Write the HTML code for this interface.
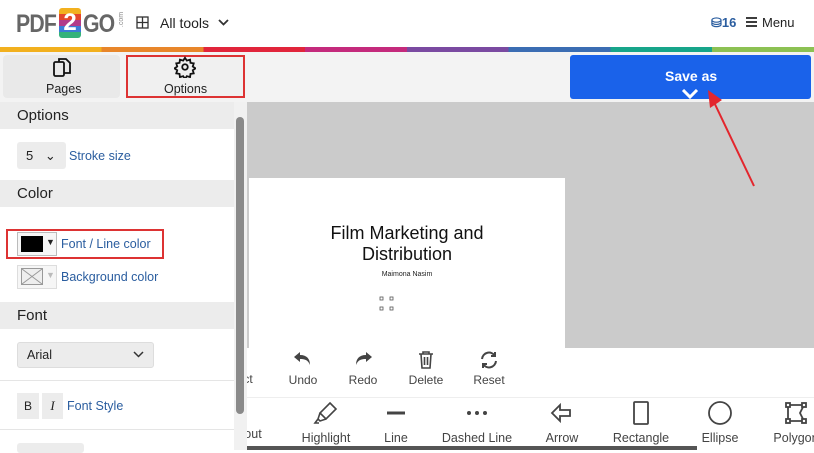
<!DOCTYPE html>
<html><head><meta charset="utf-8">
<style>
*{box-sizing:border-box;margin:0;padding:0}
body{width:814px;height:450px;overflow:hidden;background:#fff;font-family:"Liberation Sans",sans-serif;position:relative;color:#222}
.a{position:absolute}
.lbl{color:#2a5d9f;font-size:12.5px}
.sec{position:absolute;left:0;width:234px;background:#ececec;font-size:15px;padding-left:17px;color:#222}
.tool{position:absolute;text-align:center;font-size:12px;color:#444}
</style></head><body>
<!-- header -->
<div class="a" style="left:16px;top:10px;font-weight:bold;font-size:25px;color:#666;letter-spacing:-1px;transform:scaleX(.85);transform-origin:left">PDF</div>
<div class="a" style="left:59px;top:8px;width:22px;height:30px;background:linear-gradient(#f2b01e 0 20%,#e4462a 20% 40%,#b23a8a 40% 60%,#3b7bd6 60% 80%,#34b27a 80%);border-radius:3px;color:#fff;font-weight:bold;font-size:24px;text-align:center;line-height:30px">2</div>
<div class="a" style="left:83px;top:10px;font-weight:bold;font-size:25px;color:#666;letter-spacing:-1px;transform:scaleX(.85);transform-origin:left">GO</div>
<div class="a" style="left:114px;top:16px;font-size:7px;color:#888;transform:rotate(-90deg)">.com</div>
<svg class="a" style="left:136px;top:16px" width="13" height="13" viewBox="0 0 13 13" fill="none" stroke="#333" stroke-width="1.3"><rect x="1" y="1" width="11" height="11"/><path d="M6.5 1v11M1 6.5h11"/></svg>
<div class="a" style="left:160px;top:15px;font-size:14px">All tools</div>
<svg class="a" style="left:218px;top:19px" width="11" height="8" viewBox="0 0 11 8"><path d="M1 1l4.5 4.5L10 1" stroke="#333" stroke-width="1.8" fill="none"/></svg>
<div class="a" style="left:711px;top:15px;font-size:13px;color:#2a5d9f;font-weight:bold">⛁16</div>
<svg class="a" style="left:746px;top:17px" width="11" height="10"><path d="M0 1h11M0 5h11M0 9h11" stroke="#222" stroke-width="1.8"/></svg>
<div class="a" style="left:762px;top:15px;font-size:13px">Menu</div>
<div class="a" style="left:0;top:47px;width:814px;height:5px;background:linear-gradient(90deg,#f2b01e 0 12.5%,#e8862a 12.5% 25%,#e1253b 25% 37.5%,#c42a7c 37.5% 50%,#7a4aa1 50% 62.5%,#3b6db3 62.5% 75%,#17a58a 75% 87.5%,#8cc153 87.5%)"></div>
<!-- tab row -->
<div class="a" style="left:0;top:52px;width:814px;height:50px;background:#f3f3f3"></div>
<div class="a" style="left:3px;top:55px;width:117px;height:43px;background:#e9e9e9;border-radius:4px"></div>
<svg class="a" style="left:52px;top:57px" width="20" height="22" viewBox="0 0 20 22" fill="none" stroke="#111" stroke-width="1.8"><rect x="2" y="5" width="10" height="14" rx="1.5"/><path d="M7 5V2h7l4 4v10h-6"/></svg>
<div class="a" style="left:46px;top:82px;font-size:12.5px">Pages</div>
<div class="a" style="left:126px;top:55px;width:119px;height:43px;border:2px solid #d33;background:#f0f0f0"></div>
<svg class="a" style="left:174px;top:56px" width="22" height="22" viewBox="0 0 24 24" fill="none" stroke="#111" stroke-width="2"><circle cx="12" cy="12" r="3"/><path d="M12 2l2 3 3.5-1 .5 3.5 3.5.5-1 3.5 3 2-3 2 1 3.5-3.5.5-.5 3.5-3.5-1-2 3-2-3-3.5 1-.5-3.5-3.5-.5 1-3.5-3-2 3-2-1-3.5 3.5-.5.5-3.5 3.5 1z"/></svg>
<div class="a" style="left:164px;top:82px;font-size:12.5px">Options</div>
<div class="a" style="left:570px;top:55px;width:241px;height:44px;background:#1a62ea;border-radius:3px"></div>
<div class="a" style="left:665px;top:68px;font-size:14px;color:#fff;font-weight:bold">Save as</div>
<svg class="a" style="left:681px;top:89px" width="18" height="10"><path d="M2 1l7 7 7-7" stroke="#fff" stroke-width="3" fill="none"/></svg>
<!-- canvas area -->
<div class="a" style="left:247px;top:102px;width:567px;height:246px;background:#cbcbcb"></div>
<div class="a" style="left:249px;top:178px;width:316px;height:170px;background:#fff"></div>
<div class="a" style="left:249px;top:223px;width:316px;text-align:center;font-size:18px;line-height:21px;color:#111">Film Marketing and<br>Distribution</div>
<div class="a" style="left:249px;top:271px;width:316px;text-align:center;font-size:7px">Maimona Nasim</div>
<svg class="a" style="left:379px;top:296px" width="16" height="16" fill="none" stroke="#555" stroke-width=".8"><rect x="1" y="1" width="3" height="3"/><rect x="11" y="1" width="3" height="3"/><rect x="1" y="11" width="3" height="3"/><rect x="11" y="11" width="3" height="3"/></svg>
<!-- edit toolbar -->
<div class="a" style="left:247px;top:348px;width:567px;height:50px;background:#fff;border-bottom:1px solid #eee"></div>
<div class="tool" style="left:240px;top:372px;width:16px;overflow:hidden">ct</div>
<div class="tool" style="left:285px;top:350px;width:36px"><svg width="20" height="18" viewBox="0 0 20 18"><path d="M7 2L1 7l6 5V9c5 0 8 1 10 6 0-6-3-10-10-10z" fill="#444"/></svg><br><span style="position:relative;top:2px">Undo</span></div>
<div class="tool" style="left:345px;top:350px;width:36px"><svg width="20" height="18" viewBox="0 0 20 18"><path d="M13 2l6 5-6 5V9c-5 0-8 1-10 6 0-6 3-10 10-10z" fill="#444"/></svg><br><span style="position:relative;top:2px">Redo</span></div>
<div class="tool" style="left:405px;top:350px;width:42px"><svg width="18" height="20" viewBox="0 0 18 20" fill="none" stroke="#444" stroke-width="1.6"><path d="M2 4h14M6 4V2h6v2M4 4l1 14h8l1-14M7.5 7v8M10.5 7v8"/></svg><br><span>Delete</span></div>
<div class="tool" style="left:470px;top:350px;width:38px"><svg width="20" height="20" viewBox="0 0 20 20" fill="none" stroke="#444" stroke-width="2"><path d="M3 9a7 7 0 0 1 13-3M17 11a7 7 0 0 1-13 3"/><path d="M16 2v4h-4M4 18v-4h4"/></svg><br><span>Reset</span></div>
<!-- draw toolbar -->
<div class="tool" style="left:240px;top:427px;width:26px;font-size:12.5px">out</div>
<div class="tool" style="left:296px;top:400px;width:60px;font-size:12.5px"><svg width="26" height="26" viewBox="0 0 26 26" fill="none" stroke="#444" stroke-width="1.6"><path d="M17 3l6 6-10 10-6-6zM7 13l-2 6 2 2 6-2M5 19l-3 4h4"/></svg><div style="margin-top:2px">Highlight</div></div>
<div class="tool" style="left:376px;top:400px;width:40px;font-size:12.5px"><svg width="26" height="26"><path d="M4 13h18" stroke="#444" stroke-width="3"/></svg><div style="margin-top:2px">Line</div></div>
<div class="tool" style="left:437px;top:400px;width:80px;font-size:12.5px"><svg width="26" height="26" fill="#444"><circle cx="5" cy="13" r="2"/><circle cx="13" cy="13" r="2"/><circle cx="21" cy="13" r="2"/></svg><div style="margin-top:2px">Dashed Line</div></div>
<div class="tool" style="left:537px;top:400px;width:50px;font-size:12.5px"><svg width="26" height="26" fill="none" stroke="#444" stroke-width="1.8"><path d="M3 13l8-8v5h10v6H11v5z"/></svg><div style="margin-top:2px">Arrow</div></div>
<div class="tool" style="left:606px;top:400px;width:70px;font-size:12.5px"><svg width="26" height="26" fill="none" stroke="#444" stroke-width="1.8"><rect x="6" y="2" width="14" height="22" rx="1"/></svg><div style="margin-top:2px">Rectangle</div></div>
<div class="tool" style="left:693px;top:400px;width:54px;font-size:12.5px"><svg width="26" height="26" fill="none" stroke="#444" stroke-width="1.8"><circle cx="13" cy="13" r="11"/></svg><div style="margin-top:2px">Ellipse</div></div>
<div class="tool" style="left:768px;top:400px;width:56px;font-size:12.5px"><svg width="26" height="26" fill="none" stroke="#444" stroke-width="1.8"><path d="M5 5h16l-4 8 4 8H5z"/><rect x="3" y="3" width="4" height="4" fill="#fff"/><rect x="19" y="3" width="4" height="4" fill="#fff"/><rect x="3" y="19" width="4" height="4" fill="#fff"/><rect x="19" y="19" width="4" height="4" fill="#fff"/></svg><div style="margin-top:2px">Polygon</div></div>
<div class="a" style="left:247px;top:446px;width:450px;height:4px;background:#555"></div>
<!-- left panel -->
<div class="a" style="left:0;top:102px;width:247px;height:348px;background:#fff"></div>
<div class="sec" style="top:102px;height:27px;line-height:28px">Options</div>
<div class="a" style="left:17px;top:142px;width:49px;height:27px;background:#ececec;border-radius:3px;font-size:13px;padding:6px 0 0 9px">5 <span style="position:relative;left:8px">⌄</span></div>
<div class="a lbl" style="left:69px;top:149px">Stroke size</div>
<div class="sec" style="top:180px;height:27px;line-height:28px">Color</div>
<div class="a" style="left:6px;top:229px;width:158px;height:30px;border:2px solid #d33"></div>
<div class="a" style="left:17px;top:232px;width:40px;height:24px;border:1px solid #bbb;background:#f6f6f6"></div>
<div class="a" style="left:21px;top:236px;width:22px;height:16px;background:#000"></div>
<div class="a" style="left:46px;top:237px;font-size:9px">▼</div>
<div class="a lbl" style="left:61px;top:237px">Font / Line color</div>
<div class="a" style="left:17px;top:265px;width:40px;height:24px;border:1px solid #ddd;background:#f6f6f6"></div>
<svg class="a" style="left:21px;top:268px" width="22" height="17"><rect x=".5" y=".5" width="21" height="16" fill="#eee" stroke="#999"/><path d="M1 1l20 15M21 1L1 16" stroke="#999"/></svg>
<div class="a" style="left:46px;top:270px;font-size:9px;color:#bbb">▼</div>
<div class="a lbl" style="left:61px;top:270px">Background color</div>
<div class="sec" style="top:302px;height:27px;line-height:28px">Font</div>
<div class="a" style="left:17px;top:342px;width:137px;height:26px;background:#ececec;border:1px solid #ddd;border-radius:3px;font-size:12.5px;padding:5px 0 0 9px">Arial</div>
<svg class="a" style="left:133px;top:351px" width="11" height="7"><path d="M1 1l4.5 4.5L10 1" stroke="#333" stroke-width="1.5" fill="none"/></svg>
<div class="a" style="left:0;top:380px;width:234px;height:1px;background:#e5e5e5"></div>
<div class="a" style="left:17px;top:393px;width:22px;height:26px;background:#ececec;font-size:12px;text-align:center;line-height:26px">B</div>
<div class="a" style="left:42px;top:393px;width:21px;height:26px;background:#ececec;font-size:13px;text-align:center;line-height:26px;font-style:italic;font-family:'Liberation Serif',serif">I</div>
<div class="a lbl" style="left:67px;top:399px">Font Style</div>
<div class="a" style="left:0;top:429px;width:234px;height:1px;background:#e5e5e5"></div>
<div class="a" style="left:17px;top:443px;width:67px;height:10px;background:#ececec;border-radius:3px"></div>
<!-- scrollbar -->
<div class="a" style="left:234px;top:102px;width:13px;height:348px;background:#f1f1f1"></div>
<div class="a" style="left:236px;top:117px;width:8px;height:297px;background:#8a8a8a;border-radius:4px"></div>
<!-- red arrow -->
<svg class="a" style="left:700px;top:88px" width="60" height="102"><path d="M54 98L12 10" stroke="#e3262d" stroke-width="2"/><path d="M8 2l2 18 12-8z" fill="#e3262d"/></svg>
</body></html>
